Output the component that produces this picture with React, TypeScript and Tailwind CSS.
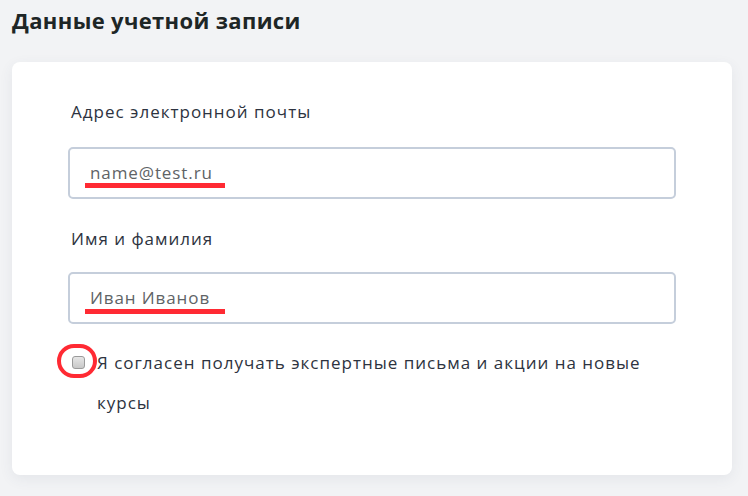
import React from "react";

export default function App() {
  return (
    <div
      className="w-[748px] h-[496px] bg-[#f2f3f5] overflow-hidden"
      style={{ fontFamily: '"Open Sans", "Noto Sans", sans-serif' }}
    >
      <div className="pl-[12px] pt-[4px] h-[62px]">
        <h1 className="text-[22px] leading-[32px] font-bold text-[#1e2626] tracking-[0.35px]">
          Данные учетной записи
        </h1>
      </div>
      <div className="ml-[12px] w-[720px] bg-white rounded-[8px] shadow-[0_4px_14px_rgba(60,80,100,0.08)] pl-[56px] pr-[56px] pt-[38px] pb-[52px]">
        <div className="pl-[3px] text-[17px] leading-[24px] text-[#2d3340] tracking-[1px]">
          Адрес электронной почты
        </div>
        <div className="relative mt-[23px] h-[52px] border-2 border-[#c5cedb] rounded-[5px] flex items-center pl-[20px]">
          <span className="text-[17px] text-[#606366] tracking-[0.9px]">name@test.ru</span>
          <div className="absolute left-[15px] top-[34px] w-[140px] h-[5px] bg-[#ff2a33]" />
        </div>
        <div className="mt-[28px] pl-[3px] text-[17px] leading-[24px] text-[#2d3340] tracking-[1px]">
          Имя и фамилия
        </div>
        <div className="relative mt-[21px] h-[52px] border-2 border-[#c5cedb] rounded-[5px] flex items-center pl-[20px]">
          <span className="text-[17px] text-[#606366] tracking-[0.9px]">Иван Иванов</span>
          <div className="absolute left-[15px] top-[35px] w-[140px] h-[5px] bg-[#ff2a33]" />
        </div>
        <div className="mt-[19px] flex items-start">
          <div className="relative mt-[13px] ml-[4px] w-[13px] h-[13px] shrink-0">
            <div className="w-[13px] h-[13px] rounded-[3px] border border-[#9a9a9a] bg-gradient-to-b from-[#e6e6e6] to-[#c8c8c8]" />
            <div className="absolute left-[-15px] top-[-12px] w-[40px] h-[34px] rounded-full border-[4px] border-[#ff2a33]" />
          </div>
          <div className="ml-[12px] text-[17px] leading-[40px] text-[#2d3340] tracking-[1px]">
            Я согласен получать экспертные письма и акции на новые курсы
          </div>
        </div>
      </div>
    </div>
  );
}
